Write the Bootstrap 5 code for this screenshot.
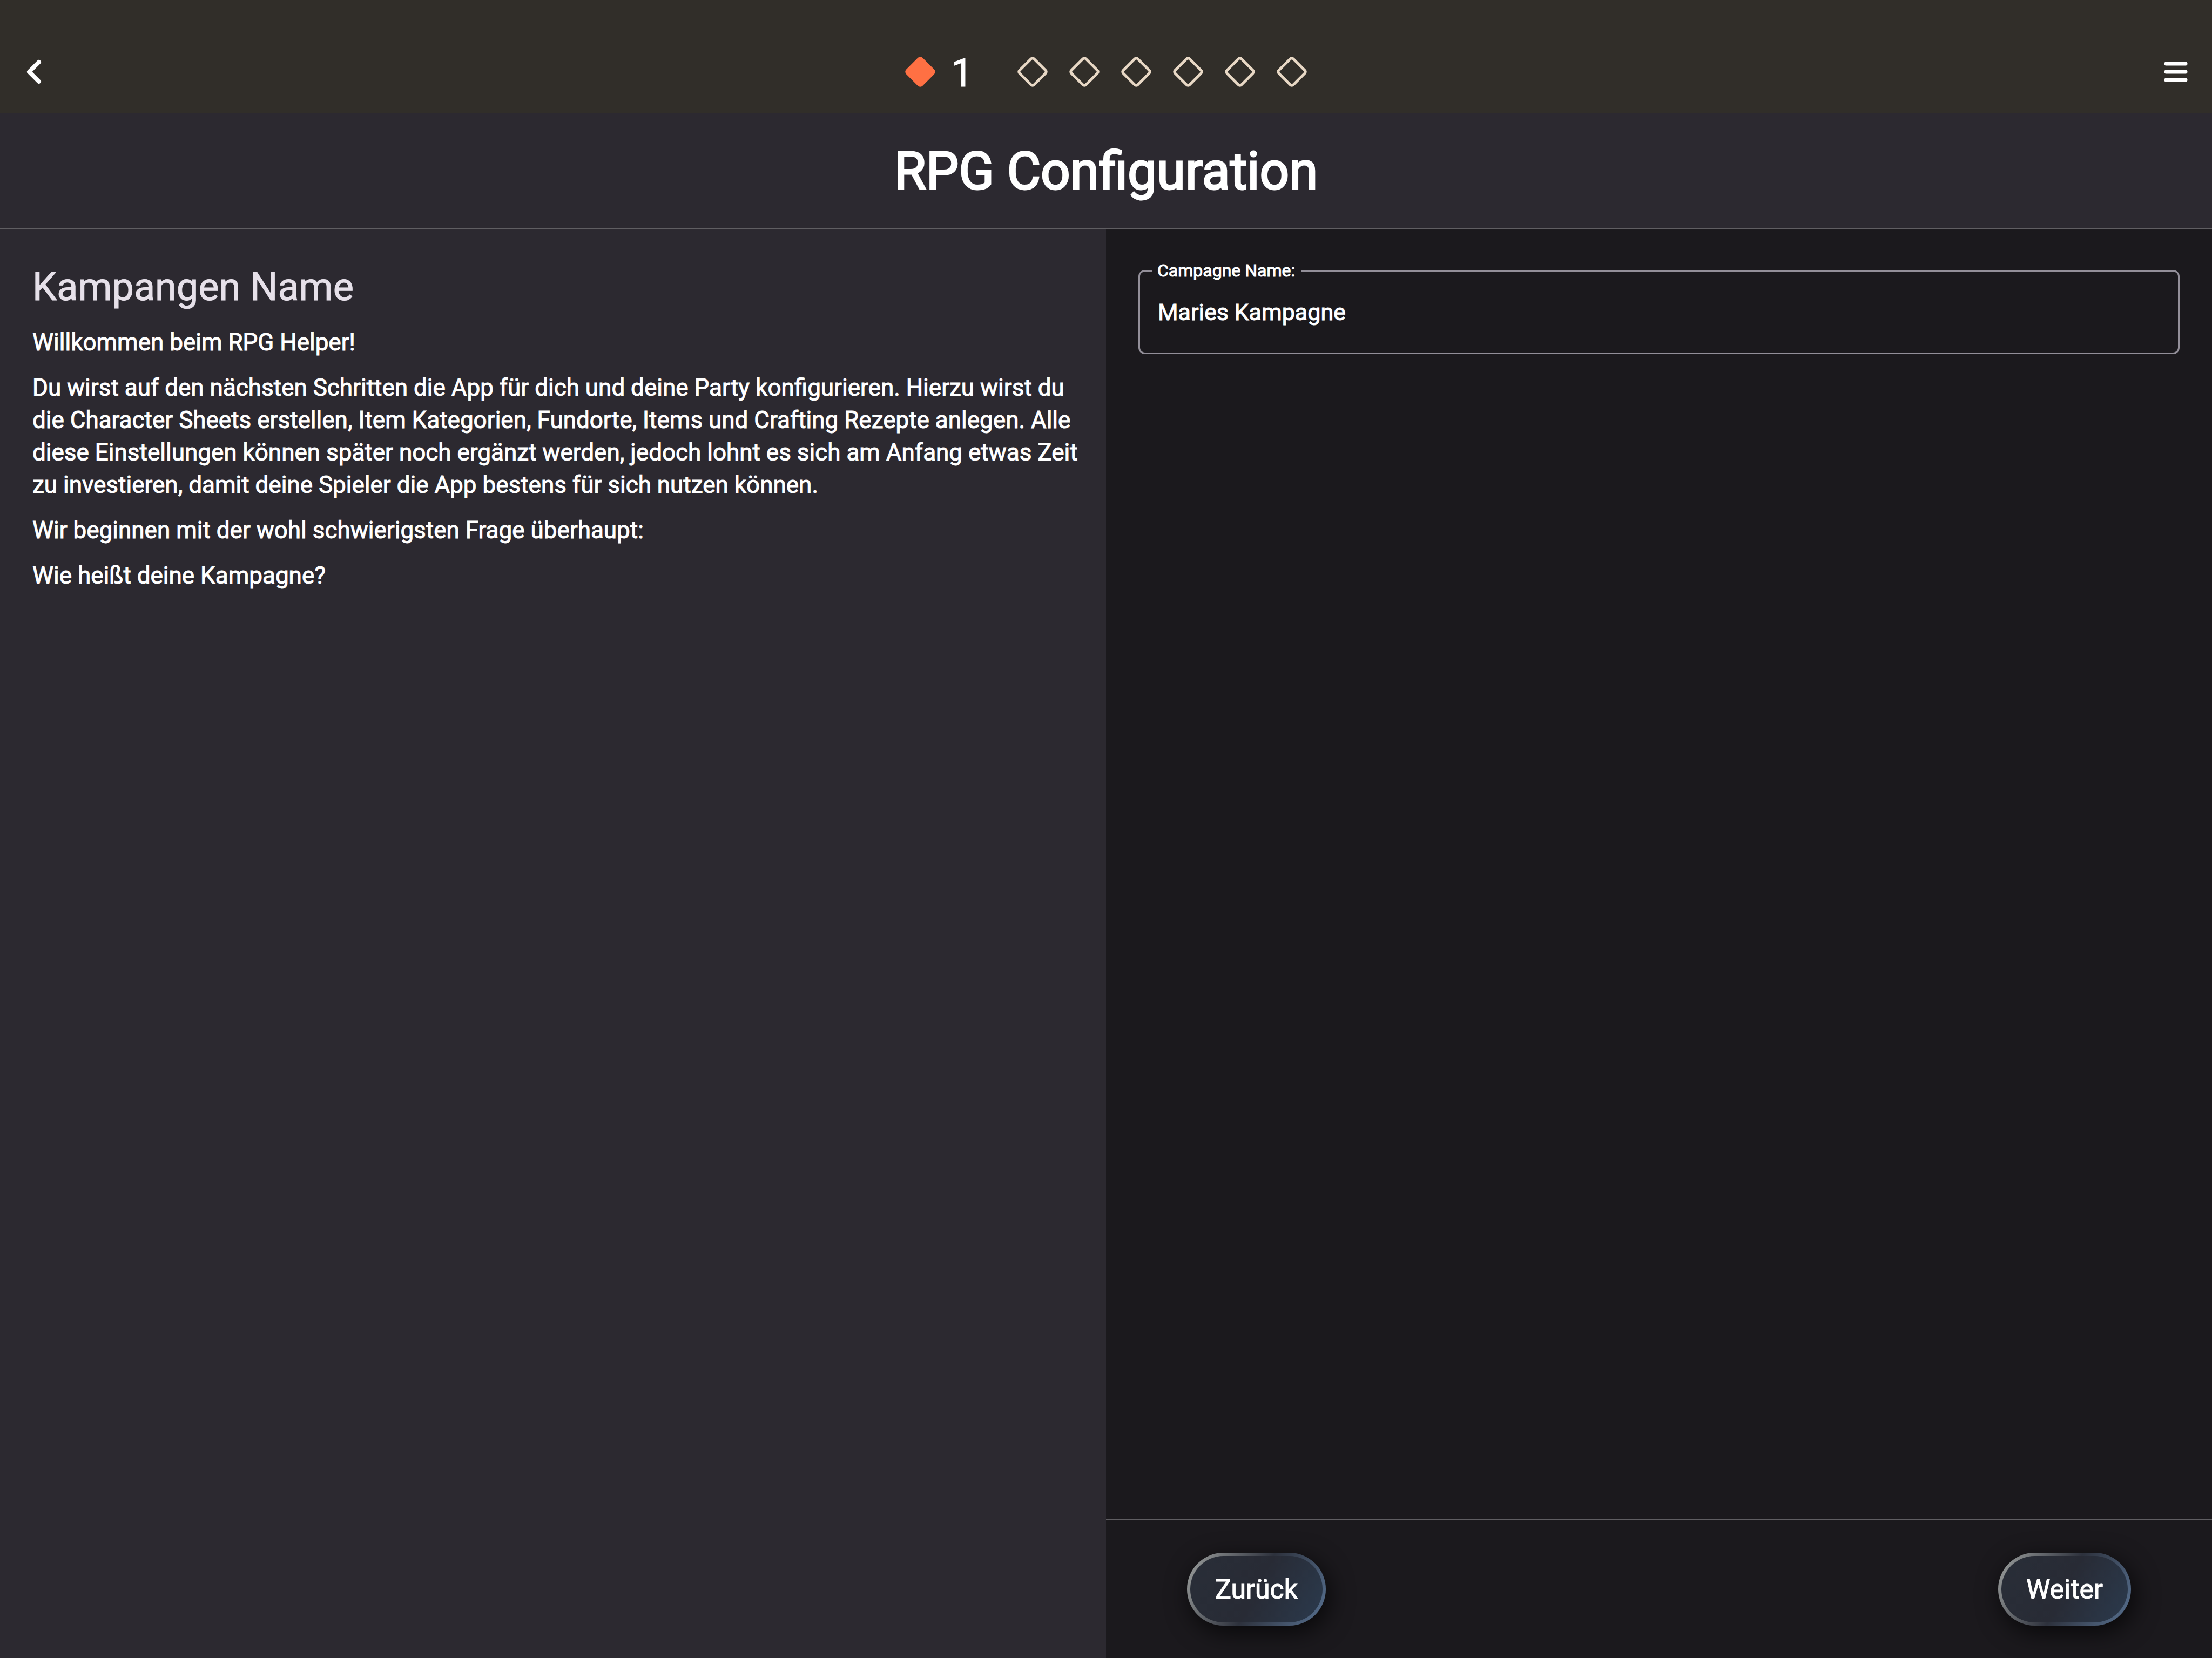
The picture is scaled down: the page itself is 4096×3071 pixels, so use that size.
<!DOCTYPE html>
<html lang="de">
<head>
<meta charset="utf-8">
<meta name="viewport" content="width=device-width, initial-scale=1">
<title>RPG Configuration</title>
<link href="https://cdn.jsdelivr.net/npm/bootstrap@5.3.0/dist/css/bootstrap.min.css" rel="stylesheet">
<style>
  :root {
    --bar: #312e29;
    --panel: #2c2930;
    --surface: #1b191d;
    --rule: #605e62;
    --outline: #938f99;
  }
  body {
    font-family: Roboto, sans-serif;
    font-size: 44px;
    line-height: 60px;
    color: #fff;
    background: var(--surface);
  }
  .app-bar {
    display: grid;
    grid-template-columns: 1fr auto 1fr;
    height: 209px;
    padding: 56px 36px 0;
    background: var(--bar);
  }
  .icon-btn { line-height: 0; }
  .icon-btn svg, .step svg { width: 60px; height: 60px; display: block; }
  .steps { gap: 36px; }
  .step-number {
    font-size: 72px;
    line-height: 96px;
    margin: 0 44px 0 -9px;
    padding-top: 6px;
    -webkit-text-stroke: 1px #fff;
  }
  .title-bar {
    padding: 48px 60px 45px;
    background: var(--panel);
    border-bottom: 3px solid var(--rule);
  }
  .title-bar h1 {
    font-size: 96px;
    line-height: 120px;
    font-weight: 400;
    -webkit-text-stroke: 3px #fff;
  }
  .intro { padding: 59px 48px 60px 60px; background: var(--panel); }
  .intro h2 {
    font-size: 72px;
    line-height: 96px;
    font-weight: 400;
    color: #e6e0e9;
    margin-bottom: 24px;
    -webkit-text-stroke: 1px #e6e0e9;
  }
  .intro p { margin-bottom: 24px; -webkit-text-stroke: 1px #fff; }
  .form-area { padding: 75px 60px; }
  .outlined .form-control {
    height: 156px;
    padding: 0 33px;
    font-size: 43px;
    line-height: 60px;
    color: #fff;
    background: transparent;
    border: 3px solid var(--outline);
    border-radius: 12px;
    -webkit-text-stroke: 1px #fff;
  }
  .outlined label {
    top: -17px;
    left: 26px;
    padding: 0 12px 0 9px;
    font-size: 32px;
    line-height: 36px;
    background: var(--surface);
    -webkit-text-stroke: 1px #fff;
  }
  .wizard-nav { padding: 60px 150px; border-top: 3px solid var(--rule); }
  .btn-glass {
    height: 135px;
    padding: 0 46px;
    font-size: 50px;
    line-height: 60px;
    color: #fff;
    -webkit-text-stroke: 1px #fff;
    border: 6px solid transparent;
    border-radius: 68px;
    background:
      linear-gradient(117deg, #292e38 0%, #282b35 50%, #2b3a4d 100%) padding-box,
      linear-gradient(117deg, #a0a3a1 0%, #2d313c 50%, #587292 100%) border-box;
    box-shadow: 6px 12px 45px rgba(0, 0, 0, .7);
  }
  .btn-glass:hover { color: #fff; }
</style>
</head>
<body class="d-flex flex-column min-vh-100">
  <svg class="d-none" aria-hidden="true">
    <symbol id="diamond" viewBox="0 0 60 60">
      <rect x="11" y="11" width="38" height="38" rx="4" transform="rotate(45 30 30)" stroke-width="5"/>
    </symbol>
  </svg>

  <header class="app-bar align-items-center">
    <button type="button" class="icon-btn btn p-0 border-0 me-auto" aria-label="Zurück">
      <svg viewBox="0 0 60 60" fill="none" stroke="#fff" stroke-width="8" stroke-linecap="round" stroke-linejoin="round"><path d="M36 12 18 30l18 18"/></svg>
    </button>
    <div class="steps d-flex align-items-center">
      <span class="step"><svg fill="#ff7043" stroke="#ff7043"><use href="#diamond"/></svg></span>
      <span class="step-number">1</span>
      <span class="step"><svg fill="none" stroke="#e8d8c5"><use href="#diamond"/></svg></span>
      <span class="step"><svg fill="none" stroke="#e8d8c5"><use href="#diamond"/></svg></span>
      <span class="step"><svg fill="none" stroke="#e8d8c5"><use href="#diamond"/></svg></span>
      <span class="step"><svg fill="none" stroke="#e8d8c5"><use href="#diamond"/></svg></span>
      <span class="step"><svg fill="none" stroke="#e8d8c5"><use href="#diamond"/></svg></span>
      <span class="step"><svg fill="none" stroke="#e8d8c5"><use href="#diamond"/></svg></span>
    </div>
    <button type="button" class="icon-btn btn p-0 border-0 ms-auto" aria-label="Menü">
      <svg viewBox="0 0 60 60" stroke="#fff" stroke-width="7" stroke-linecap="round"><path d="M11 15h36M11 30h36M11 45h36"/></svg>
    </button>
  </header>

  <div class="title-bar text-center">
    <h1 class="mb-0">RPG Configuration</h1>
  </div>

  <main class="row g-0 flex-grow-1">
    <section class="intro col-6">
      <h2>Kampangen Name</h2>
      <p>Willkommen beim RPG Helper!</p>
      <p>Du wirst auf den nächsten Schritten die App für dich und deine Party konfigurieren. Hierzu wirst du die Character Sheets erstellen, Item Kategorien, Fundorte, Items und Crafting Rezepte anlegen. Alle diese Einstellungen können später noch ergänzt werden, jedoch lohnt es sich am Anfang etwas Zeit zu investieren, damit deine Spieler die App bestens für sich nutzen können.</p>
      <p>Wir beginnen mit der wohl schwierigsten Frage überhaupt:</p>
      <p>Wie heißt deine Kampagne?</p>
    </section>
    <form class="col-6 d-flex flex-column">
      <div class="form-area flex-grow-1">
        <div class="outlined position-relative">
          <input type="text" class="form-control" id="campaign" value="Maries Kampagne">
          <label for="campaign" class="position-absolute">Campagne Name:</label>
        </div>
      </div>
      <div class="wizard-nav d-flex justify-content-between">
        <button type="button" class="btn btn-glass">Zurück</button>
        <button type="button" class="btn btn-glass">Weiter</button>
      </div>
    </form>
  </main>
<script src="https://cdn.jsdelivr.net/npm/bootstrap@5.3.0/dist/js/bootstrap.bundle.min.js"></script>
</body>
</html>
